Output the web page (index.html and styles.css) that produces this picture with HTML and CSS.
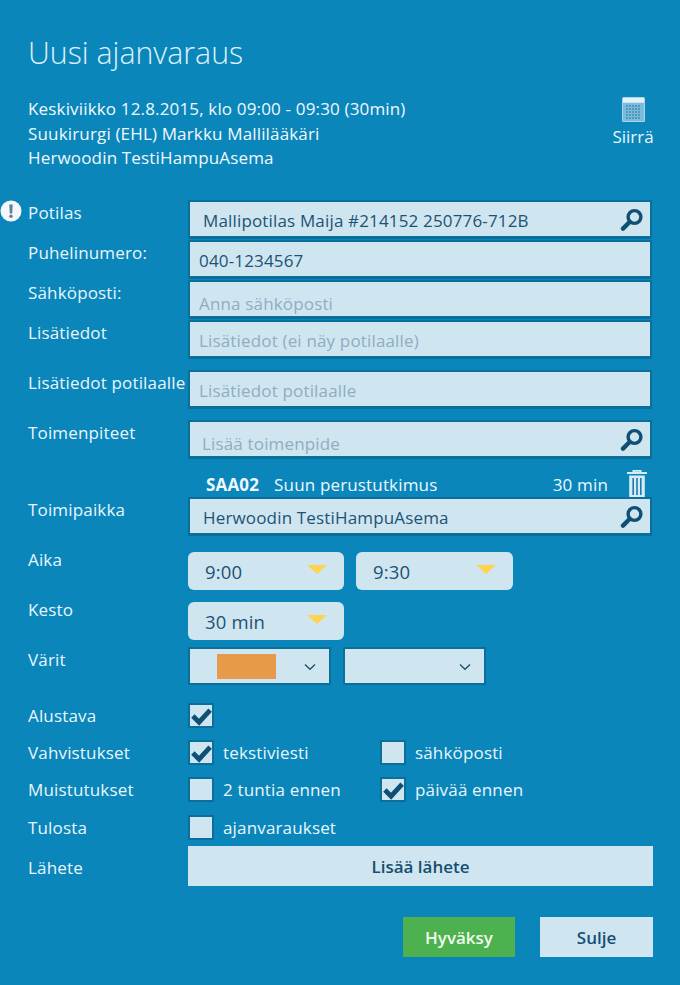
FILE: index.html
```html
<!DOCTYPE html>
<html lang="fi">
<head>
<meta charset="utf-8">
<title>Uusi ajanvaraus</title>
<link rel="stylesheet" href="styles.css">
</head>
<body>
<svg class="defs" width="0" height="0" aria-hidden="true">
  <defs>
    <symbol id="search" viewBox="0 0 24 24">
      <circle cx="14.5" cy="9" r="6.4" fill="none" stroke="currentColor" stroke-width="3.4"/>
      <path d="M9.6 14 3 20.6" fill="none" stroke="currentColor" stroke-width="4.4" stroke-linecap="round"/>
    </symbol>
    <symbol id="check" viewBox="0 0 24 24">
      <path d="M3 12.5 9.5 19 21 6.5" fill="none" stroke="currentColor" stroke-width="5"/>
    </symbol>
    <symbol id="chev" viewBox="0 0 12 8">
      <path d="M1 1.5 6 6.2 11 1.5" fill="none" stroke="currentColor" stroke-width="1.4"/>
    </symbol>
  </defs>
</svg>
<main class="page">
  <header class="head">
    <h1 class="title">Uusi ajanvaraus</h1>
    <div class="summary">
      <div class="info">
        <div>Keskiviikko 12.8.2015, klo 09:00 - 09:30 (30min)</div>
        <div>Suukirurgi (EHL) Markku Mallilääkäri</div>
        <div>Herwoodin TestiHampuAsema</div>
      </div>
      <div class="move">
        <svg class="cal" viewBox="0 0 23 25" width="23" height="25" aria-hidden="true">
          <rect width="23" height="25" rx="1.5" fill="#a9d4e9"/>
          <rect x="1" y="1" width="21" height="4.5" fill="#e4f2f8"/>
          <rect x="1" y="6" width="21" height="18" fill="#7dbbd9"/>
          <path d="M4 9h15M4 12h15M4 15h15M4 18h15M4 21h15" stroke="#3f8fb8" stroke-width="1.6" stroke-dasharray="2 1"/>
        </svg>
        <span>Siirrä</span>
      </div>
    </div>
  </header>

  <form class="form">
    <div class="row r-patient">
      <svg class="alert" viewBox="0 0 22 22" width="22" height="22" aria-hidden="true">
        <circle cx="11" cy="11" r="10.5" fill="#f3f8fb"/>
        <path d="M9.3 4.5h3.4l-.5 9h-2.4z" fill="#5f7f95"/>
        <circle cx="11" cy="16.2" r="1.7" fill="#5f7f95"/>
      </svg>
      <label class="lbl">Potilas</label>
      <div class="field search-field indent"><span class="val">Mallipotilas Maija #214152 250776-712B</span><svg class="mag"><use href="#search"/></svg></div>
    </div>
    <div class="row r-next">
      <label class="lbl">Puhelinumero:</label>
      <div class="field"><span class="val">040-1234567</span></div>
    </div>
    <div class="row r-next">
      <label class="lbl">Sähköposti:</label>
      <div class="field low"><span class="ph">Anna sähköposti</span></div>
    </div>
    <div class="row r-next">
      <label class="lbl">Lisätiedot</label>
      <div class="field"><span class="ph">Lisätiedot (ei näy potilaalle)</span></div>
    </div>
    <div class="row r-gap">
      <label class="lbl">Lisätiedot potilaalle</label>
      <div class="field"><span class="ph">Lisätiedot potilaalle</span></div>
    </div>
    <div class="row r-gap">
      <label class="lbl">Toimenpiteet</label>
      <div class="field search-field indent-s"><span class="ph low-text">Lisää toimenpide</span><svg class="mag"><use href="#search"/></svg></div>
    </div>
    <div class="proc">
      <b class="code">SAA02</b>
      <span class="pname">Suun perustutkimus</span>
      <span class="pdur">30 min</span>
      <svg class="trash" viewBox="0 0 20 27" width="20" height="27" aria-hidden="true">
        <path d="M6.5 2.2V.8h7v1.4M0 3h20" fill="none" stroke="#d6ebf5" stroke-width="2"/>
        <path d="M2.2 5.5h15.6V27H2.2z" fill="#d6ebf5"/>
        <path d="M6.2 8v17M10 8v17M13.8 8v17" stroke="#1a7cab" stroke-width="1.6"/>
      </svg>
    </div>
    <div class="row">
      <label class="lbl">Toimipaikka</label>
      <div class="field search-field indent"><span class="val">Herwoodin TestiHampuAsema</span><svg class="mag"><use href="#search"/></svg></div>
    </div>
    <div class="row r-time">
      <label class="lbl lbl-high">Aika</label>
      <div class="picks">
        <div class="pick"><span>9:00</span><i class="tri"></i></div>
        <div class="pick"><span>9:30</span><i class="tri"></i></div>
      </div>
    </div>
    <div class="row r-dur">
      <label class="lbl lbl-high">Kesto</label>
      <div class="picks">
        <div class="pick"><span>30 min</span><i class="tri"></i></div>
      </div>
    </div>
    <div class="row r-color">
      <label class="lbl">Värit</label>
      <div class="colors">
        <div class="color"><i class="swatch"></i><svg class="chev"><use href="#chev"/></svg></div>
        <div class="color"><svg class="chev"><use href="#chev"/></svg></div>
      </div>
    </div>
    <div class="row r-check first">
      <label class="lbl">Alustava</label>
      <div class="checks">
        <span class="opt"><i class="box"><svg class="tick"><use href="#check"/></svg></i></span>
      </div>
    </div>
    <div class="row r-check">
      <label class="lbl">Vahvistukset</label>
      <div class="checks">
        <span class="opt"><i class="box"><svg class="tick"><use href="#check"/></svg></i>tekstiviesti</span>
        <span class="opt"><i class="box"></i>sähköposti</span>
      </div>
    </div>
    <div class="row r-check">
      <label class="lbl">Muistutukset</label>
      <div class="checks">
        <span class="opt"><i class="box"></i>2 tuntia ennen</span>
        <span class="opt"><i class="box"><svg class="tick"><use href="#check"/></svg></i>päivää ennen</span>
      </div>
    </div>
    <div class="row r-check r-print">
      <label class="lbl">Tulosta</label>
      <div class="checks">
        <span class="opt"><i class="box"></i>ajanvaraukset</span>
      </div>
    </div>
    <div class="row r-refer">
      <label class="lbl lbl-mid">Lähete</label>
      <button type="button" class="wide">Lisää lähete</button>
    </div>
    <div class="actions">
      <button type="button" class="btn ok">Hyväksy</button>
      <button type="button" class="btn close">Sulje</button>
    </div>
  </form>
</main>
</body>
</html>
```
FILE: styles.css
```css
* { box-sizing: border-box; }
html, body { margin: 0; height: 985px; overflow: hidden; }
body {
  background: #0a86bb;
  color: #e6f4fa;
  font-family: "Open Sans", "Noto Sans", sans-serif;
  font-size: 17px;
  letter-spacing: 0.16px;
}
.defs { position: absolute; }
.page { padding: 0 27px 0 28px; }
.head { height: 200px; padding-top: 33px; }
.title {
  margin: 0;
  font-size: 30.3px;
  line-height: 40px;
  font-weight: 300;
  letter-spacing: 0;
  color: #dff1f8;
}
.summary { display: flex; justify-content: space-between; margin-top: 24px; }
.info { line-height: 24.5px; color: #f0f9fc; }
.move {
  display: flex;
  flex-direction: column;
  align-items: center;
  width: 40px;
  letter-spacing: 0;
  color: #eaf6fb;
}
.cal { display: block; }
.move span { line-height: 24px; margin-top: 3px; }

.row { display: flex; align-items: flex-start; }
.r-patient { position: relative; }
.alert { position: absolute; left: -28px; top: 0; }
.r-next { margin-top: 1px; }
.r-gap { margin-top: 11px; }
.r-time { margin-top: 16px; }
.r-dur { margin-top: 12px; }
.r-color { margin-top: 7px; }
.r-check { margin-top: 12px; height: 25px; }
.r-check.first { margin-top: 18px; }
.r-check.r-print { margin-top: 13px; }
.r-refer { margin-top: 6px; align-items: center; }

.lbl { width: 160px; flex: none; line-height: 26px; color: #e9f6fb; white-space: nowrap; }
.lbl-high { line-height: 16px; }
.lbl-mid { padding-top: 4px; }

.field {
  flex: none;
  width: 464px;
  height: 39px;
  display: flex;
  align-items: center;
  justify-content: space-between;
  padding: 2px 6px 0 9px;
  background: #cfe6f1;
  border: 2px solid #0b6f9b;
  border-bottom-width: 3px;
}
.field.low { padding-top: 8px; }
.low-text { position: relative; top: 3px; }
.indent { padding-left: 13px; }
.indent-s { padding-left: 12px; }
.val { color: #1c5273; }
.ph { color: #8fadc0; }
.mag { width: 24px; height: 24px; color: #0f4f74; flex: none; }

.proc {
  display: flex;
  align-items: center;
  height: 38px;
  margin-left: 160px;
  padding: 13px 6px 0 18px;
  color: #eef8fc;
}
.code { font-weight: 700; margin-right: 15px; }
.pdur { margin-left: auto; margin-right: 19px; }
.trash { align-self: flex-end; }

.picks { display: flex; gap: 12px; }
.pick {
  width: 156px;
  height: 38px;
  padding: 0 17px;
  display: flex;
  align-items: center;
  justify-content: space-between;
  background: #cfe6f1;
  border-radius: 6px;
  color: #1c5273;
  font-size: 18.5px;
}
.pick + .pick { width: 157px; }
.tri {
  width: 0;
  height: 0;
  margin: 0 0 4px;
  border-left: 10px solid transparent;
  border-right: 10px solid transparent;
  border-top: 9px solid #fdd34f;
}
.colors { display: flex; gap: 12px; }
.color {
  position: relative;
  width: 143px;
  height: 38px;
  background: #cfe6f1;
  border: 2px solid #0b6f9b;
  display: flex;
  align-items: center;
  padding-left: 27px;
}
.swatch { width: 59px; height: 25px; background: #e89a4b; }
.chev { position: absolute; right: 13px; top: 14px; width: 12px; height: 8px; color: #1c5273; }

.checks { display: flex; align-items: center; height: 25px; }
.opt { display: flex; align-items: center; width: 192px; color: #e9f6fb; white-space: nowrap; }
.box {
  flex: none;
  width: 26px;
  height: 25px;
  margin-right: 9px;
  background: #cfe6f1;
  border: 2px solid #0b6f9b;
  display: flex;
  align-items: center;
  justify-content: center;
}
.tick { flex: none; width: 23px; height: 23px; color: #0f4f74; }

button { font: inherit; letter-spacing: 0; border: 0; cursor: pointer; }
.wide {
  width: 465px;
  height: 40px;
  background: #cfe6f1;
  color: #154e70;
  font-weight: 600;
}
.actions { display: flex; justify-content: flex-end; gap: 25px; margin-top: 31px; }
.btn { width: 113px; height: 40px; font-weight: 600; }
.ok { background: #4db14f; color: #f0fbee; width: 112px; }
.close { background: #cfe6f1; color: #154e70; }
```
